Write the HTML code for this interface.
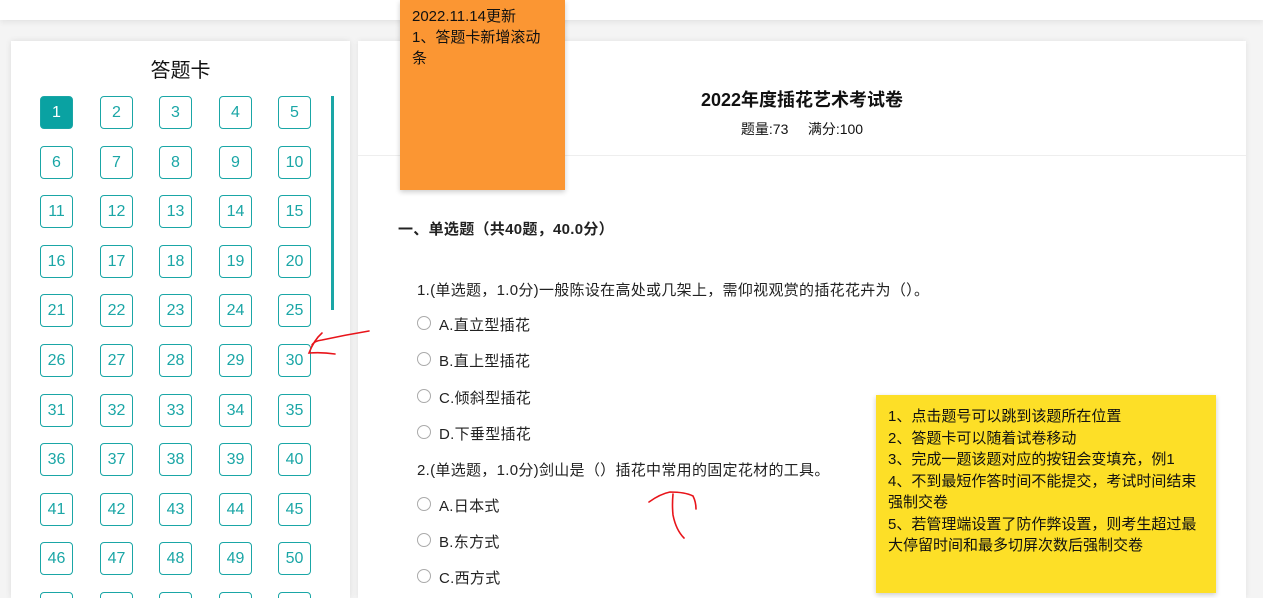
<!DOCTYPE html><html style="overflow:hidden"><head><meta charset="utf-8"><style>
html,body{margin:0;width:1263px;height:598px;overflow:hidden}
body{background:#f4f4f4;font-family:"Liberation Sans","Noto Sans CJK SC",sans-serif;position:relative}
.top{position:absolute;left:0;top:0;width:1263px;height:20px;background:#fff;box-shadow:0 2px 6px rgba(0,0,0,.08)}
.card{position:absolute;left:11px;top:41px;width:339px;height:557px;overflow:hidden;background:#fff;box-shadow:0 0 6px rgba(0,0,0,.1)}
.card h3{margin:0;position:absolute;top:13px;left:0;width:339px;text-align:center;font-weight:normal;font-size:20px;color:#111}
.b{position:absolute;width:31px;height:31px;border:1px solid #1aa6a6;border-radius:4px;color:#1aa6a6;font-size:16px;text-align:center;line-height:31px;box-sizing:content-box}
.b.on{background:#0aa2a2;color:#fff}
.sb{position:absolute;left:320px;top:55px;width:3px;height:214px;background:#1aa6a6}
.main{position:absolute;left:358px;top:41px;width:888px;height:557px;background:#fff;box-shadow:0 0 6px rgba(0,0,0,.08)}
.t{position:absolute;top:45px;left:0;width:888px;text-align:center;font-weight:bold;font-size:18px;color:#111}
.s{position:absolute;top:78px;left:0;width:888px;text-align:center;font-size:14px;color:#111}
.hr{position:absolute;top:114px;left:0;width:888px;height:1px;background:#eee}
.tx{position:absolute;font-size:15px;letter-spacing:0.3px;color:#222;white-space:nowrap}
.r{position:absolute;width:12px;height:12px;border:1px solid #aaa;border-radius:50%}
.n1{position:absolute;left:400px;top:0;width:165px;height:190px;background:#fb9633;box-shadow:0 2px 5px rgba(0,0,0,.2);font-size:15px;line-height:21px;padding:6px 12px;box-sizing:border-box;color:#111;white-space:nowrap}
.n2{position:absolute;left:876px;top:395px;width:340px;height:198px;background:#fddf27;box-shadow:0 2px 5px rgba(0,0,0,.2);font-size:15px;line-height:21.5px;padding:11px 12px;box-sizing:border-box;color:#111;white-space:nowrap}
</style></head><body>
<div class="top"></div>
<div class="card"><h3>答题卡</h3>
<div id="g"></div><div class="sb"></div></div>
<div class="main"><div class="t">2022年度插花艺术考试卷</div><div class="s">题量:73 &nbsp;&nbsp;&nbsp; 满分:100</div><div class="hr"></div></div>
<div class="tx" style="left:398px;top:218px;font-weight:bold">一、单选题（共40题，40.0分）</div>
<div class="tx" style="left:417px;top:279px">1.(单选题，1.0分)一般陈设在高处或几架上，需仰视观赏的插花花卉为（）。</div>
<div class="r" style="left:417px;top:316px"></div><div class="tx" style="left:439px;top:314px">A.直立型插花</div>
<div class="r" style="left:417px;top:352px"></div><div class="tx" style="left:439px;top:350px">B.直上型插花</div>
<div class="r" style="left:417px;top:389px"></div><div class="tx" style="left:439px;top:387px">C.倾斜型插花</div>
<div class="r" style="left:417px;top:425px"></div><div class="tx" style="left:439px;top:423px">D.下垂型插花</div>
<div class="tx" style="left:417px;top:459px">2.(单选题，1.0分)剑山是（）插花中常用的固定花材的工具。</div>
<div class="r" style="left:417px;top:497px"></div><div class="tx" style="left:439px;top:495px">A.日本式</div>
<div class="r" style="left:417px;top:533px"></div><div class="tx" style="left:439px;top:531px">B.东方式</div>
<div class="r" style="left:417px;top:569px"></div><div class="tx" style="left:439px;top:567px">C.西方式</div>
<div class="n1">2022.11.14更新<br>1、答题卡新增滚动<br>条</div>
<div class="n2">1、点击题号可以跳到该题所在位置<br>2、答题卡可以随着试卷移动<br>3、完成一题该题对应的按钮会变填充，例1<br>4、不到最短作答时间不能提交，考试时间结束<br>强制交卷<br>5、若管理端设置了防作弊设置，则考生超过最<br>大停留时间和最多切屏次数后强制交卷</div>
<svg style="position:absolute;left:0;top:0" width="1263" height="598"><g fill="none" stroke="#e8141a" stroke-width="1.6" stroke-linecap="round">
<path d="M369 331 Q345 335 322 340 Q314 341 312 345"/><path d="M322 333 Q314 340 309 353 Q322 352 335 354"/>
<path d="M649 502 Q660 494 670 492 Q685 492 693 496 Q696 502 696 509"/><path d="M673 494 Q672 505 673 515 Q676 530 684 538"/>
</g></svg>
<script>
var g=document.getElementById('g'),xs=[29,89,148,208,267];
for(var i=0;i<60;i++){var d=document.createElement('div');d.className='b'+(i==0?' on':'');d.style.left=xs[i%5]+'px';d.style.top=(55+Math.floor(i/5)*49.6)+'px';d.textContent=i+1;g.appendChild(d);}
</script>
</body></html>
